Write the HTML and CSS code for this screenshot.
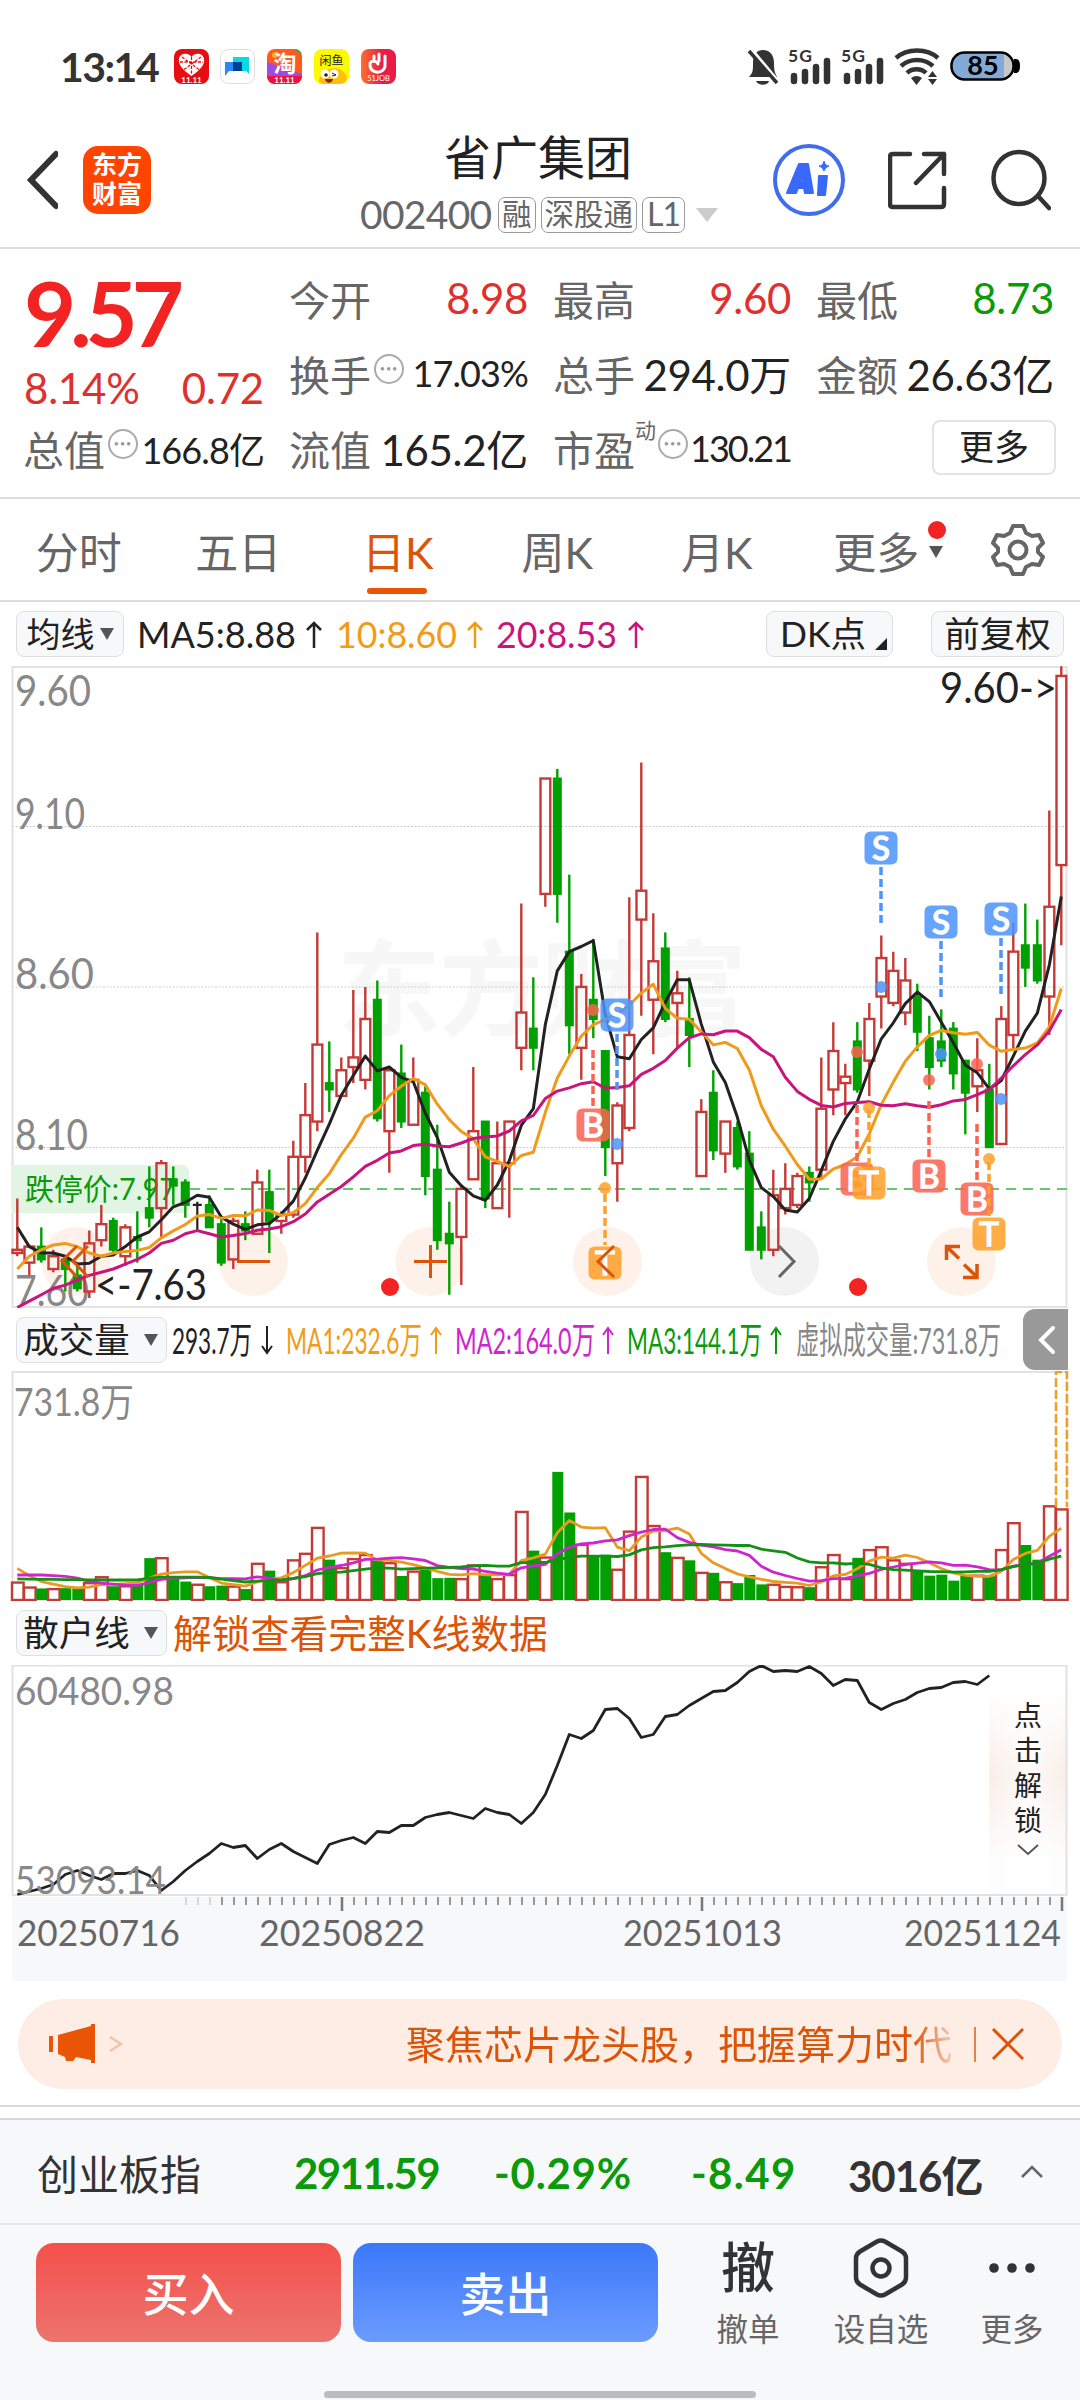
FILE: index.html
```html
<!DOCTYPE html>
<html lang="zh-CN">
<head>
    <meta charset="UTF-8">
    <meta name="viewport" content="width=device-width, initial-scale=1.0">
    <title>省广集团 002400</title>
    <link rel="stylesheet" href="styles.css">
</head>
<body>
    <div class="status-bar">
        <span class="clock">13:14</span>
        <div class="app-icons">
            <svg width="35" height="35" viewBox="0 0 35 35"><rect width="35" height="35" rx="8" fill="#e80d12"/><path d="M17.500 27C9 21 4 16 5 10c1-6 9-7 12.500-2 3.500-5 11.500-4 12.500 2 1 6-4 11-12.500 17z" fill="#fff"/><path d="M8 8l19 14M27 8L8 22M17.500 8v18M6 13h23" stroke="#e80d12" stroke-width="1.300" stroke-dasharray="3 1.500" fill="none"/><text x="17.500" y="33.500" font-size="8" font-weight="bold" fill="#fff" text-anchor="middle">11.11</text></svg>
            <svg width="35" height="35" viewBox="0 0 35 35"><rect x=".5" y=".5" width="34" height="34" rx="8" fill="#fff" stroke="#ddd"/><path d="M13 8h16v17l-3-3H13z" fill="#06dbe0"/><path d="M5 13h17v9H9l-4 5z" fill="#2d86fa"/><rect x="13" y="13" width="9" height="9" fill="#003f96"/></svg>
            <svg width="35" height="35" viewBox="0 0 35 35"><rect width="35" height="35" rx="8" fill="#ff5a1f"/><path d="M0 13l35 12v3H0z" fill="#a04be0"/><path d="M27 0a8 8 0 0 1 8 6z" fill="#21b83b"/><circle cx="8" cy="6" r="3" fill="#ffb01f"/><path d="M0 27h35a8 8 0 0 1-8 8H8a8 8 0 0 1-8-8z" fill="#ee1240"/><text x="18" y="23" font-size="23" font-weight="bold" fill="#fff" text-anchor="middle">淘</text><text x="17.500" y="33.500" font-size="8" font-weight="bold" fill="#fff" text-anchor="middle">11.11</text></svg>
            <svg width="35" height="35" viewBox="0 0 35 35"><rect width="35" height="35" rx="8" fill="#fdf900"/><path d="M5 33c0-16 24-19 28-4a8 8 0 0 1-8 6H9z" fill="#fdbf0d"/><circle cx="11" cy="25" r="4.500" fill="#fff"/><circle cx="20" cy="25" r="4.500" fill="#fff"/><circle cx="12" cy="26" r="1.800" fill="#222"/><path d="M18 24l4 2-4 1" stroke="#222" fill="none"/><path d="M11 30h8c-1 5-7 5-8 0z" fill="#8a2512"/><text x="17.500" y="16" font-size="12" fill="#222" text-anchor="middle">闲鱼</text></svg>
            <svg width="35" height="35" viewBox="0 0 35 35"><defs><linearGradient id="job"><stop offset="0" stop-color="#fb7030"/><stop offset=".6" stop-color="#e91c45"/></linearGradient></defs><rect width="35" height="35" rx="8" fill="url(#job)"/><path d="M9 15c-1 11 16 11 15 0V7M9 14c2-3 7-2 8 1M13 10V7M18 12V5" stroke="#fff" stroke-width="3" stroke-linecap="round" fill="none"/><text x="17.500" y="32" font-size="7.500" fill="#fff" text-anchor="middle">51JOB</text></svg>
        </div>
        <div class="status-right">
            <svg width="32" height="38" viewBox="0 0 32 38"><path d="M2 30c4-4 4-7 4-14C6 7 10 3 16 3s11 4 11 13c0 8 1 10 3 14z" fill="#333"/><path d="M9 34h13c-1 5-11 5-13 0z" fill="#333"/><path d="M3 1l29 35" stroke="#fff" stroke-width="4"/><path d="M2 4l28 32" stroke="#333" stroke-width="3.500"/></svg>
            <svg width="44" height="38" viewBox="0 0 44 38"><text x="0" y="15" font-size="17.500" font-weight="bold" fill="#333" textLength="24">5G</text><path d="M6 29v5M17 25v9M28 20v14M39 14v20" stroke="#333" stroke-width="6.500" stroke-linecap="round"/></svg>
            <svg width="44" height="38" viewBox="0 0 44 38"><text x="0" y="15" font-size="17.500" font-weight="bold" fill="#333" textLength="24">5G</text><path d="M6 29v5M17 25v9M28 20v14M39 14v20" stroke="#333" stroke-width="6.500" stroke-linecap="round"/></svg>
            <svg width="46" height="38" viewBox="0 0 46 38"><g fill="none" stroke="#333" stroke-width="4.500"><path d="M2 11c11-10 31-10 42 0"/><path d="M7 19c9-8 23-8 32 0"/><path d="M13 26c5-5 14-5 19 0"/></g><path d="M17 31q5.500-4 11 0l-5.500 7zM34 30l4.500-6 4.500 6zM34 32l4.500 6 4.500-6z" fill="#333"/></svg>
            <svg class="battery" width="70" height="30" viewBox="0 0 70 30"><rect x="1.500" y="1.500" width="62" height="27" rx="13" fill="#c7c7c7"/><path d="M14 1.500h40v27H14a13.500 13.500 0 0 1 0-27z" fill="#83aad6"/><rect x="1.500" y="1.500" width="62" height="27" rx="13" fill="none" stroke="#000" stroke-width="2.500"/><path d="M64 8h2q4 0 4 7t-4 7h-2z"/><text x="33" y="24" font-size="27" font-weight="bold" text-anchor="middle">85</text></svg>
        </div>
    </div>

    <div class="header">
        <svg class="back" width="32" height="60" viewBox="0 0 32 60"><path d="M30 4L5 30l25 26" fill="none" stroke="#333" stroke-width="6" stroke-linecap="round"/></svg>
        <div class="brand">东方<br>财富</div>
        <div class="stock">
            <div class="stock-name">省广集团</div>
            <div class="stock-code"><span class="code">002400</span><span class="tag">融</span><span class="tag">深股通</span><span class="tag l1">L1</span><i class="tri"></i></div>
        </div>
        <div class="header-icons">
            <svg width="72" height="72" viewBox="0 0 72 72"><circle cx="36" cy="36" r="34" fill="none" stroke="#416ced" stroke-width="4"/><g fill="#3869fb" stroke="#3869fb" stroke-width="2" stroke-linejoin="round"><path fill-rule="evenodd" d="M14 49l12-29h9l5 29h-8l-1-5h-6l-2 5zM27 38h3v-8z"/><path d="M46 32h8l-2 19h-7z"/><path d="M51 17q1 5 5 5-4 1-5 5-1-4-5-5 4 0 5-5z" stroke-width="1"/></g></svg>
            <svg width="60" height="60" viewBox="0 0 60 60"><path d="M22 4H5q-3 0-3 3v47q0 3 3 3h48q3 0 3-3V38M36 4h20v20M56 4L28 33" fill="none" stroke="#333" stroke-width="4.500" stroke-linecap="round" stroke-linejoin="round"/></svg>
            <svg width="60" height="62" viewBox="0 0 60 62"><ellipse cx="28" cy="29" rx="25.500" ry="26" fill="none" stroke="#333" stroke-width="4.500"/><path d="M47 47l11 12" stroke="#333" stroke-width="4.500" stroke-linecap="round"/></svg>
        </div>
    </div>

    <div class="quote">
        <div class="main-price">
            <div class="price">9.57</div>
            <div class="change"><span>8.14%</span><span>0.72</span></div>
        </div>
        <div class="cell c2"><label>今开</label><b class="up">8.98</b></div>
        <div class="cell"><label>最高</label><b class="up">9.60</b></div>
        <div class="cell"><label>最低</label><b class="down">8.73</b></div>
        <div class="cell c2"><label>换手<i class="dots">•••</i></label><b class="small">17.03%</b></div>
        <div class="cell"><label>总手</label><b>294.0万</b></div>
        <div class="cell"><label>金额</label><b>26.63亿</b></div>
        <div class="cell"><label>总值<i class="dots">•••</i></label><b class="small">166.8亿</b></div>
        <div class="cell"><label>流值</label><b>165.2亿</b></div>
        <div class="cell"><label>市盈<sup>动</sup><i class="dots">•••</i></label><b class="small pe">130.21</b></div>
        <div class="cell last"><span class="more-btn">更多</span></div>
    </div>

    <div class="tabs">
        <span>分时</span>
        <span>五日</span>
        <span class="active">日K</span>
        <span>周K</span>
        <span>月K</span>
        <span class="tab-more">更多<i class="red-dot"></i><i class="caret"></i></span>
        <svg class="gear" width="54" height="54" viewBox="-27 -27 54 54"><path d="M-5-24H5L8-17 14-14 21-15 25-7 20-2V2L25 7 21 15 14 14 8 17 5 24H-5L-8 17-14 14-21 15-25 7-20 2V-2L-25-7-21-15-14-14-8-17z" fill="none" stroke="#666" stroke-width="4" stroke-linejoin="round"/><circle r="8.500" fill="none" stroke="#666" stroke-width="4"/></svg>
    </div>

    <div class="toolbar">
        <span class="chip ma-chip">均线<i class="caret"></i></span>
        <svg class="legend" width="520" height="64" viewBox="130 602 520 64" font-size="37">
            <text x="137" y="648" fill="#222" textLength="159" lengthAdjust="spacingAndGlyphs">MA5:8.88</text>
            <text x="336" y="648" fill="#f29b16" textLength="121" lengthAdjust="spacingAndGlyphs">10:8.60</text>
            <text x="496" y="648" fill="#c9147d" textLength="121" lengthAdjust="spacingAndGlyphs">20:8.53</text>
            <g fill="none" stroke-width="2.500"><path d="M314 648v-25M307 630l7-7 7 7" stroke="#222"/><path d="M475 648v-25M468 630l7-7 7 7" stroke="#f29b16"/><path d="M636 648v-25M629 630l7-7 7 7" stroke="#c9147d"/></g>
        </svg>
        <span class="chip dk-chip">DK点<i class="corner"></i></span>
        <span class="chip">前复权</span>
    </div>

    <svg class="panel" width="1080" height="642" viewBox="0 666 1080 642">
        <text x="337" y="1028" font-size="104" font-weight="bold" fill="#f7f7f7" textLength="410">东方财富</text>
        <path d="M12 826.500H1067M12 987H1067M12 1147.500H1067" stroke="#ccc" stroke-width="1" stroke-dasharray="2 1.500"/>
        <rect x="12.500" y="667" width="1054" height="640" fill="none" stroke="#e2e2e2" stroke-width="2"/>
        <g fill="#fef1ea"><circle cx="76" cy="1261.500" r="34.500"/><circle cx="253.500" cy="1261.500" r="34.500"/><circle cx="430" cy="1261.500" r="34.500"/><circle cx="607.500" cy="1261.500" r="34.500"/><circle cx="961.500" cy="1261.500" r="34.500"/><circle cx="784.500" cy="1261.500" r="34.500" fill="#f2f2f2"/></g>
        <path d="M12 1165h170q7 0 7 7v34q0 7-7 7H12z" fill="#e2f4e3"/>
        <path d="M190 1189H1067" stroke="#6cc46c" stroke-width="2" stroke-dasharray="10 7"/>
        <g font-size="42" fill="#888">
            <text x="15" y="706" textLength="76" lengthAdjust="spacingAndGlyphs">9.60</text>
            <text x="15" y="828.500" textLength="70" lengthAdjust="spacingAndGlyphs">9.10</text>
            <text x="15" y="989" textLength="79" lengthAdjust="spacingAndGlyphs">8.60</text>
            <text x="15" y="1150" textLength="73" lengthAdjust="spacingAndGlyphs">8.10</text>
            <text x="15" y="1306" textLength="74" lengthAdjust="spacingAndGlyphs">7.60</text>
        </g>
        <text x="25" y="1200" font-size="30" fill="#0a9a0a" textLength="151" lengthAdjust="spacingAndGlyphs">跌停价:7.97</text>
        <g id="candles"></g>
        <g font-size="42" fill="#222">
            <text x="95" y="1300" textLength="112" lengthAdjust="spacingAndGlyphs">&lt;-7.63</text>
            <text x="940" y="703" textLength="117" lengthAdjust="spacingAndGlyphs">9.60-&gt;</text>
        </g>
        <g id="signals"></g>
        <g fill="none" stroke="#dc5408" stroke-width="3">
            <path d="M77 1257l-15 15 15 16M88 1257l-15 15 15 16" transform="translate(0 -11)"/>
            <path d="M237 1261.500h33M414 1261.500h33M430.500 1245v33"/>
            <path d="M614 1246l-16 15.500 16 15.500"/>
            <path d="M946.500 1260v-13.500h13.500M947 1247l12 11.500M977 1264v13.500h-14M977 1277l-13-12.500" stroke-width="3.500"/>
            <path d="M779 1246l15 15.500-15 15.500" stroke="#666"/>
        </g>
        <circle cx="390" cy="1287" r="9" fill="#f22323"/>
        <circle cx="858" cy="1287" r="9" fill="#f22323"/>
    </svg>

    <div class="toolbar sub">
        <span class="chip ind-chip">成交量<i class="caret"></i></span>
        <svg class="legend" width="840" height="63" viewBox="170 1308 840 63" font-size="37">
            <text x="172" y="1354" fill="#222" textLength="80" lengthAdjust="spacingAndGlyphs">293.7万</text>
            <text x="286" y="1354" fill="#f29b16" textLength="136" lengthAdjust="spacingAndGlyphs">MA1:232.6万</text>
            <text x="455" y="1354" fill="#cf25cf" textLength="140" lengthAdjust="spacingAndGlyphs">MA2:164.0万</text>
            <text x="627" y="1354" fill="#0a9a0a" textLength="135" lengthAdjust="spacingAndGlyphs">MA3:144.1万</text>
            <text x="796" y="1354" fill="#888" textLength="205" lengthAdjust="spacingAndGlyphs">虚拟成交量:731.8万</text>
            <g fill="none" stroke-width="2"><path d="M267 1326v27M262 1346l5 7 5-7" stroke="#222"/><path d="M436 1354v-26M431 1335l5-7 5 7" stroke="#f29b16"/><path d="M608 1354v-26M603 1335l5-7 5 7" stroke="#cf25cf"/><path d="M776 1354v-26M771 1335l5-7 5 7" stroke="#0a9a0a"/></g>
        </svg>
        <span class="collapse"><svg width="20" height="32" viewBox="0 0 20 32"><path d="M17 4L5 16l12 12" fill="none" stroke="#fff" stroke-width="4" stroke-linecap="round"/></svg></span>
    </div>

    <svg class="panel" width="1080" height="230" viewBox="0 1371 1080 230">
        <rect x="12.500" y="1372" width="1054" height="228.500" fill="none" stroke="#e2e2e2" stroke-width="2"/>
        <text x="14" y="1415.500" font-size="39" fill="#888" textLength="120" lengthAdjust="spacingAndGlyphs">731.8万</text>
        <g id="volume"></g>
        <path d="M1056 1507V1372h11V1507" fill="none" stroke="#eba02c" stroke-width="2.500" stroke-dasharray="9 3"/>
    </svg>

    <div class="toolbar third">
        <span class="chip ind-chip">散户线<i class="caret"></i></span>
        <span class="unlock">解锁查看完整K线数据</span>
    </div>

    <svg class="panel" width="1080" height="316" viewBox="0 1665 1080 316">
        <defs>
            <linearGradient id="lock" x2="0" y2="1"><stop offset=".1" stop-color="#fff"/><stop offset=".48" stop-color="#f9eee8"/><stop offset=".85" stop-color="#fdfdfd"/></linearGradient>
            <linearGradient id="lockFade"><stop offset="0" stop-color="#fff" stop-opacity="0"/><stop offset=".5" stop-color="#fff" stop-opacity=".7"/><stop offset="1" stop-color="#fff" stop-opacity="0"/></linearGradient>
        </defs>
        <rect x="12" y="1897" width="1055" height="84" fill="#f7f8fa"/>
        <rect x="989" y="1666" width="78" height="229" fill="url(#lock)"/>
        <rect x="989" y="1666" width="78" height="229" fill="url(#lockFade)"/>
        <rect x="12.500" y="1665.500" width="1054" height="229.500" fill="none" stroke="#e2e2e2" stroke-width="2"/>
        <g id="retail"></g>
        <g font-size="38" fill="#888">
            <text x="15" y="1705" textLength="159" lengthAdjust="spacingAndGlyphs">60480.98</text>
            <text x="15" y="1894" textLength="151" lengthAdjust="spacingAndGlyphs">53093.14</text>
        </g>
        <g font-size="37.500" fill="#666">
            <text x="17" y="1946" textLength="163" lengthAdjust="spacingAndGlyphs">20250716</text>
            <text x="259" y="1946" textLength="166" lengthAdjust="spacingAndGlyphs">20250822</text>
            <text x="623" y="1946" textLength="159" lengthAdjust="spacingAndGlyphs">20251013</text>
            <text x="904" y="1946" textLength="157" lengthAdjust="spacingAndGlyphs">20251124</text>
        </g>
        <g font-size="28" fill="#222" text-anchor="middle"><text x="1028" y="1726">点</text><text x="1028" y="1761">击</text><text x="1028" y="1796">解</text><text x="1028" y="1831">锁</text></g>
        <path d="M1018 1845l10 9 10-9" fill="none" stroke="#555" stroke-width="2"/>
    </svg>

    <div class="banner">
        <svg width="66" height="42" viewBox="0 0 66 42"><path d="M3 13v16M45 1v39" stroke="#e95504" stroke-width="4"/><path d="M10 12L43 3v34l-15-3-3 4h-7l-1-4-7-3z" fill="#e95504"/></svg>
        <svg class="arrow" width="14" height="18" viewBox="0 0 14 18"><path d="M1 2l11 7-11 7" fill="none" stroke="#f5c3a5" stroke-width="2.500"/></svg>
        <span class="banner-text">聚焦芯片龙头股，把握算力时代</span>
        <i class="divider"></i>
        <svg width="34" height="34" viewBox="0 0 34 34"><path d="M2 2l30 30M32 2L2 32" stroke="#dc5408" stroke-width="3"/></svg>
    </div>

    <div class="gap"></div>

    <div class="index-row">
        <span class="index-name">创业板指</span>
        <b class="i1">2911.59</b>
        <b class="i2">-0.29%</b>
        <b class="i3">-8.49</b>
        <b class="amount">3016亿</b>
        <svg width="24" height="16" viewBox="0 0 24 16"><path d="M2 13L12 3l10 10" fill="none" stroke="#666" stroke-width="2.500"/></svg>
    </div>

    <div class="bottom-bar">
        <span class="btn buy">买入</span>
        <span class="btn sell">卖出</span>
        <div class="action a1"><div class="ico che">撤</div><span>撤单</span></div>
        <div class="action a2"><div class="ico"><svg width="56" height="60" viewBox="0 0 56 60"><path d="M24 3.500q4-2 8 0l17 10q4 2.500 4 7v19q0 4.500-4 7l-17 10q-4 2-8 0l-17-10q-4-2.500-4-7v-19q0-4.500 4-7z" fill="none" stroke="#333" stroke-width="4.500"/><circle cx="28" cy="30" r="8.500" fill="none" stroke="#333" stroke-width="4.500"/></svg></div><span>设自选</span></div>
        <div class="action a3"><div class="ico"><svg width="48" height="12" viewBox="0 0 48 12" fill="#333"><circle cx="6" cy="6" r="4.800"/><circle cx="24" cy="6" r="4.800"/><circle cx="42" cy="6" r="4.800"/></svg></div><span>更多</span></div>
        <i class="home"></i>
    </div>

    <script src="chart.js"></script>
</body>
</html>
```

FILE: styles.css
```css
body {
    margin: 0;
    width: 1080px;
    height: 2400px;
    overflow: hidden;
    background: #fff;
    color: #222;
    font-family: Lato, "Noto Sans CJK SC", sans-serif;
}
svg {
    display: block;
    flex: none;
}
svg text {
    font-family: Lato, "Noto Sans CJK SC", sans-serif;
}
i {
    font-style: normal;
}
b {
    font-weight: normal;
}

/* status bar */
.status-bar {
    display: flex;
    align-items: center;
    height: 88px;
    padding: 22px 60px 0;
}
.clock {
    width: 113.500px;
    font-size: 41px;
    font-weight: bold;
    color: #333;
    letter-spacing: -1.500px;
}
.app-icons {
    display: flex;
    gap: 11.800px;
}
.status-right {
    display: flex;
    align-items: center;
    gap: 9px;
    margin-left: auto;
}
.battery {
    margin-left: 1px;
}

/* header */
.header {
    display: flex;
    align-items: center;
    height: 139px;
    padding: 3px 29px 0 26px;
    border-bottom: 2px solid #ddd;
    box-sizing: border-box;
}
.brand {
    width: 68px;
    height: 68px;
    margin-left: 25px;
    box-sizing: border-box;
    padding-top: 4px;
    border-radius: 15px;
    background: #ff4400;
    color: #fff;
    font-size: 25px;
    font-weight: bold;
    line-height: 29px;
    text-align: center;
}
.stock {
    width: 360px;
    margin: 9px 0 0 207px;
    white-space: nowrap;
}
.stock-name {
    padding-left: 86px;
    font-size: 47px;
    line-height: 60px;
}
.stock-code {
    display: flex;
    align-items: center;
    height: 56px;
    color: #666;
}
.code {
    width: 140px;
    padding-left: 2px;
    margin-top: -1px;
    box-sizing: border-box;
    font-size: 39px;
    letter-spacing: -0.700px;
}
.tag {
    height: 36px;
    margin-right: 5px;
    padding: 0 3px;
    border: 1.500px solid #999;
    border-radius: 7px;
    box-sizing: border-box;
    font-size: 29.500px;
    line-height: 32px;
}
.l1 {
    padding: 0 4px;
    font-size: 32px;
    letter-spacing: -1px;
}
.tri {
    margin-left: 6px;
    border: 11px solid transparent;
    border-top: 14px solid #ccc;
    border-bottom: 0;
}
.header-icons {
    display: flex;
    align-items: center;
    margin-left: auto;
    gap: 43px;
}

/* quote block */
.quote {
    display: grid;
    grid-template-columns: 240px 238px 237px 237px;
    grid-template-rows: 74px 75px 75px;
    column-gap: 26px;
    height: 250px;
    padding: 12px 24px 8px;
    box-sizing: border-box;
    border-bottom: 2px solid #ddd;
}
.main-price {
    grid-row: 1 / 3;
    color: #f22323;
}
.price {
    height: 92px;
    font-size: 90px;
    font-weight: bold;
    line-height: 102px;
    letter-spacing: -6px;
}
.change {
    display: flex;
    justify-content: space-between;
    margin-top: 10px;
    font-size: 42px;
    line-height: 50px;
    letter-spacing: -0.200px;
    color: #e0302e;
}
.cell {
    display: flex;
    align-items: center;
    justify-content: space-between;
    white-space: nowrap;
}
.cell label {
    display: flex;
    align-items: center;
    margin-left: -1px;
    font-size: 41px;
    color: #666;
}
.cell b {
    font-size: 42px;
    letter-spacing: -0.300px;
}
.cell .small {
    font-size: 36px;
    letter-spacing: -0.900px;
}
.cell .pe {
    letter-spacing: -2px;
}
.cell .up {
    color: #e0302e;
}
.cell .down {
    color: #0a9a0a;
}
.dots {
    width: 26px;
    height: 26px;
    margin: -7px 0 0 3px;
    border: 2px solid #aaa;
    border-radius: 50%;
    font-size: 9px;
    line-height: 26px;
    letter-spacing: 1px;
    text-align: center;
    color: #999;
}
.cell sup {
    align-self: flex-start;
    font-size: 21px;
    line-height: 24px;
    margin-right: -1px;
}
.cell.last {
    justify-content: flex-end;
}
.more-btn {
    width: 124px;
    height: 55px;
    border: 2px solid #e3e3e3;
    border-radius: 8px;
    box-sizing: border-box;
    font-size: 35px;
    line-height: 48px;
    text-align: center;
    color: #222;
    margin: 0 -2px 0 0;
}

/* period tabs */
.tabs {
    display: flex;
    align-items: center;
    height: 103px;
    border-bottom: 2px solid #ddd;
    box-sizing: border-box;
}
.tabs span {
    position: relative;
    width: 159.500px;
    padding-top: 6px;
    left: -1px;
    font-size: 43px;
    line-height: 95px;
    text-align: center;
    color: #666;
}
.tabs .active {
    color: #dc5408;
}
.active::after {
    content: "";
    position: absolute;
    left: 50%;
    bottom: 6px;
    width: 60px;
    height: 6px;
    margin-left: -31px;
    border-radius: 3px;
    background: #e95504;
}
.red-dot {
    position: absolute;
    left: 131px;
    top: 22px;
    width: 18px;
    height: 18px;
    border-radius: 50%;
    background: #f22323;
}
.caret {
    display: inline-block;
    border: 7.500px solid transparent;
    border-top: 12px solid #555;
    border-bottom: 0;
}
.tab-more .caret {
    position: absolute;
    left: 132px;
    top: 47px;
}
.gear {
    margin-left: 34px;
}

/* toolbars */
.toolbar {
    display: flex;
    align-items: center;
    height: 64px;
    padding: 0 16px;
}
.chip {
    display: flex;
    align-items: center;
    justify-content: center;
    position: relative;
    width: 133px;
    height: 46px;
    border: 1.500px solid #dcdfe4;
    border-radius: 8px;
    box-sizing: border-box;
    background: #f7f8fa;
    font-size: 35.500px;
    line-height: 42px;
    white-space: nowrap;
}
.ma-chip {
    width: 108px;
    font-size: 34px;
    gap: 5px;
}
.legend {
    margin-left: 6px;
}
.dk-chip {
    width: 127px;
    margin: 0 38px 0 auto;
    justify-content: flex-start;
    padding-left: 13px;
}
.corner {
    position: absolute;
    right: 5px;
    bottom: 6px;
    border-left: 12px solid transparent;
    border-bottom: 12px solid #222;
}
.sub {
    height: 63px;
    padding-right: 12px;
}
.third {
    height: 64px;
}
.ind-chip {
    width: 151px;
    gap: 14px;
    padding-right: 2px;
}
.sub .legend {
    margin-left: 3px;
}
.collapse {
    display: flex;
    align-items: center;
    justify-content: center;
    width: 45px;
    height: 61px;
    margin-left: auto;
    border-radius: 12px 0 0 12px;
    background: #999;
}
.unlock {
    margin-left: 6px;
    font-size: 38.800px;
    line-height: 60px;
    color: #dc5408;
}

/* promo banner */
.banner {
    display: flex;
    align-items: center;
    height: 90px;
    margin: 18px 18px 16px;
    padding: 0 37px 0 30px;
    border-radius: 45px;
    background: #fdede4;
}
.arrow {
    margin-left: -5px;
}
.banner-text {
    width: 551px;
    margin-left: auto;
    margin-right: 17px;
    overflow: hidden;
    white-space: nowrap;
    font-size: 39px;
    line-height: 60px;
    color: #dc5408;
    -webkit-mask-image: linear-gradient(to right, #000 92%, transparent 101%);
    mask-image: linear-gradient(to right, #000 92%, transparent 101%);
}
.divider {
    width: 2px;
    height: 35px;
    margin-right: 15px;
    background: #dc5408;
    opacity: 0.700;
}
.gap {
    height: 11px;
    border-top: 2px solid #d8d8d8;
    border-bottom: 2px solid #d8d8d8;
}

/* index quote */
.index-row {
    display: flex;
    align-items: center;
    height: 103px;
    padding: 0 36px 0 37px;
    background: #f7f8fa;
    border-bottom: 2px solid #e6e8ea;
    white-space: nowrap;
}
.index-row b {
    padding-top: 3px;
    font-size: 42px;
    font-weight: bold;
    color: #0a9a0a;
}
.index-name {
    width: 257px;
    font-size: 41px;
    color: #333;
}
.index-row .i1 {
    width: 200px;
    letter-spacing: -1.600px;
}
.index-row .i2 {
    width: 197px;
    letter-spacing: 0.800px;
}
.index-row .i3 {
    width: 157px;
    letter-spacing: 1.400px;
}
.index-row .amount {
    width: 172px;
    letter-spacing: -1px;
    color: #333;
}

/* trade bar */
.bottom-bar {
    position: relative;
    display: flex;
    align-items: flex-start;
    height: 176px;
    padding-left: 36px;
    background: #f7f8fa;
}
.btn {
    width: 305px;
    height: 99px;
    margin: 18px 12px 0 0;
    border-radius: 18px;
    color: #fff;
    font-size: 46px;
    font-weight: 500;
    line-height: 101px;
    text-align: center;
}
.buy {
    background: linear-gradient(#f4504b, #ec746e);
}
.sell {
    background: linear-gradient(#3b78f9, #6b9bff);
}
.action {
    width: 100px;
    text-align: center;
    color: #666;
    font-size: 31.500px;
    line-height: 36px;
}
.ico {
    display: flex;
    align-items: center;
    justify-content: center;
    height: 86px;
}
.che {
    font-size: 54px;
    font-weight: 500;
    color: #333;
}
.a1 {
    margin-left: 28px;
}
.a2 {
    margin-left: 33px;
}
.a3 {
    margin-left: 31px;
}
.home {
    position: absolute;
    left: 324px;
    bottom: 3px;
    width: 432px;
    height: 7px;
    border-radius: 4px;
    background: #bbb;
}
```

FILE: chart.js
```js
// open, high, low, close in cents
const days = [
    [777,794,776,778],[774,779,770,779],[779,785,774,775],[772,778,771,776],[775,776,765,772],
    [770,774,765,766],[765,784,763,780],[781,792,779,786],[787,788,777,778],[776,786,773,785],
    [782,790,774,781],[791,804,785,788],[791,806,782,805],[800,804,792,798],[799,800,788,792],
    [792,793,784,792],[792,795,785,785],[786,788,773,774],[775,788,772,787],[786,790,781,784],
    [783,803,783,799],[796,803,777,787],[787,790,783,789],[789,812,788,807],[807,830,802,820],
    [818,877,815,842],[830,843,821,828],[826,838,826,834],[835,859,830,838],[831,860,828,850],
    [856,862,818,819],[815,835,802,834],[833,842,816,818],[817,838,817,831],[827,829,795,801],
    [803,817,778,781],[783,793,764,780],[782,798,767,797],[800,835,800,815],[818,818,791,794],
    [791,818,791,805],[805,818,788,818],[841,886,834,852],[847,863,834,841],[889,925,885,925],
    [925,928,880,889],[871,895,839,848],[841,864,831,860],[856,875,844,850],[840,840,801,810],
    [805,824,793,823],[816,888,815,845],[881,930,851,890],[856,883,839,868],[872,877,849,850],
    [855,865,841,858],[850,863,835,845],[801,825,801,821],[827,834,806,809],[808,818,802,818],
    [816,818,803,804],[808,815,778,778],[785,790,775,778],[778,803,776,795],[791,805,789,797],
    [792,802,791,801],[802,804,793,799],[803,838,800,822],[828,849,820,840],[830,836,820,832],
    [843,849,827,828],[837,855,826,850],[857,876,847,869],[855,871,854,865],[852,869,848,862],
    [857,861,840,846],[844,851,828,835],[843,853,835,837],[847,849,828,833],[837,837,814,827],
    [829,844,821,834],[828,836,810,810],[811,854,811,850],[845,880,840,871],[873,886,860,866],
    [873,881,861,862],[857,915,845,885],[898,960,873,957]
];
const volumes = [
    59,43,37,38,38,37,57,76,44,47,51,134,137,70,59,52,44,46,46,35,119,94,60,130,151,234,129,105,134,147,
    126,121,77,94,97,70,71,70,114,78,70,83,285,158,139,410,280,180,142,145,100,222,397,240,153,138,127,
    90,87,60,54,80,50,52,45,44,41,108,147,70,135,163,172,130,119,96,78,81,62,78,81,76,163,249,176,129,303,293
];
const retail = [
    229,226,223,219,209,205,210,214,208,208,205,210,225,216,205,196,188,178,182,180,193,184,178,186,192,
    198,179,175,172,178,166,167,160,160,152,149,147,150,153,143,147,149,158,147,129,100,69,73,65,44,43,
    53,72,69,51,49,40,33,26,25,17,6,0,6,5,6,1,8,20,14,15,37,44,38,34,27,23,22,17,16,19,10
];
const forceDown = [13, 15];

const RED = '#c53a36', GREEN = '#00a000';
const xAt = i => 17.3 + 12 * i;
const priceY = p => 666.3 + (960 - p) * 3.206;
const volY = v => 1600 - v * 0.3125;

function line(pts, color, width) {
    return `<polyline points="${pts.map(p => p[0].toFixed(1) + ',' + p[1].toFixed(1)).join(' ')}" fill="none" stroke="${color}" stroke-width="${width}" stroke-linejoin="round"/>`;
}

// head holds the averages that need days before the visible range
function average(values, n, head, toY) {
    return values.map((v, i) => {
        let avg = head[i];
        if (i >= n - 1) avg = values.slice(i - n + 1, i + 1).reduce((a, b) => a + b) / n;
        return [xAt(i), toY(avg)];
    });
}

let out = '';
days.forEach(([o, h, l, c], i) => {
    const x = xAt(i), top = priceY(Math.max(o, c)), bottom = priceY(Math.min(o, c));
    if (i === 15) {
        out += `<path d="M${x} ${priceY(h)}V${priceY(l)}M${x - 4.5} ${top}h9" stroke="#222" stroke-width="2.2"/>`;
    } else if (c >= o) {
        out += `<path d="M${x} ${priceY(h)}V${top}M${x} ${bottom}V${priceY(l)}" stroke="${RED}" stroke-width="2.4"/>`;
        out += `<rect x="${x - 4.8}" y="${top}" width="9.8" height="${bottom - top}" fill="none" stroke="${RED}" stroke-width="2.4"/>`;
    } else {
        out += `<path d="M${x} ${priceY(h)}V${priceY(l)}" stroke="${GREEN}" stroke-width="2.4"/>`;
        out += `<rect x="${x - 4.5}" y="${top - 1}" width="9" height="${bottom - top + 2}" fill="${GREEN}"/>`;
    }
});
const closes = days.map(d => d[3]);
out += line(average(closes, 5, [785,779,777,777], priceY), '#222', 3);
out += line(average(closes, 10, [772,776,778,779.5,780,779,777,776,777], priceY), '#f09a1a', 3);
out += line(average(closes, 20, [760,762,764,766,767,768.6,770,771,772,773.5,775,777,780,781,783,784,783,782,782.5], priceY), '#c9147d', 3);
document.getElementById('candles').innerHTML = out;

// buy, sell and T marks: letter, x, badge y, dot y, dashed line from and to
const signals = [
    ['S', 881, 848, 987, 867, 924], ['S', 941, 922, 1054, 941, 998], ['S', 1001, 919, 1099, 938, 995],
    ['S', 617, 1015, 1144, 1034, 1090], ['B', 593, 1125, 1010, 1050, 1107], ['B', 857, 1179, 1052, 1105, 1162],
    ['B', 929, 1176, 1080, 1101, 1158], ['B', 977, 1199, 1064, 1124, 1181], ['T', 605, 1263, 1188, 1194, 1245],
    ['T', 869, 1183, 1108, 1110, 1165], ['T', 989, 1234, 1159, 1162, 1216]
];
const tint = { S: '#4d94fb', B: '#fb6350', T: '#ffa029' };
document.getElementById('signals').innerHTML = signals.map(([k, x, y, dot, y1, y2]) =>
    `<path d="M${x} ${y1}V${y2}" stroke="${tint[k]}" stroke-width="3.5" stroke-dasharray="8 4"/>
    <circle cx="${x}" cy="${dot}" r="6" fill="${tint[k]}" opacity=".85"/>
    <rect x="${x - 16.5}" y="${y - 16.5}" width="33" height="33" rx="6" fill="${tint[k]}" opacity=".86"/>
    <text x="${x}" y="${y + 12}" font-size="33" fill="#fff" stroke="#fff" stroke-width="1.5" text-anchor="middle">${k}</text>`
).join('');

out = '';
volumes.forEach((v, i) => {
    const x = xAt(i), y = volY(v);
    const up = i === 15 || (days[i][3] >= days[i][0] && !forceDown.includes(i));
    out += up
        ? `<rect x="${x - 5.3}" y="${y + 1}" width="11.6" height="${1599 - y}" fill="#fff" stroke="${RED}" stroke-width="2.4"/>`
        : `<rect x="${x - 5}" y="${y}" width="11" height="${1600 - y}" fill="${GREEN}"/>`;
});
out += line(average(volumes, 5, [101,78,59,51], volY), '#e89a22', 2.8);
out += line(average(volumes, 10, [80,80,80,78,76,70,60,54,51], volY), '#cf25cf', 2.8);
out += line(average(volumes, 20, [68,67,66,66,65,65,64,64,64,64,64,70,73,73,73,73,72,67,62], volY), '#149014', 2.8);
document.getElementById('volume').innerHTML = out;

out = line(retail.map((y, i) => [xAt(i), 1665.5 + y]), '#222', 2.8);
for (let i = 14; i < 88; i++) {
    const major = i % 30 === 27;
    out += `<path d="M${xAt(i) + 0.7} 1897V${major ? 1911 : 1905}" stroke="${i < 17 ? '#ccc' : '#777'}" stroke-width="${major ? 2.5 : 1.5}"/>`;
}
document.getElementById('retail').innerHTML = out;
```
